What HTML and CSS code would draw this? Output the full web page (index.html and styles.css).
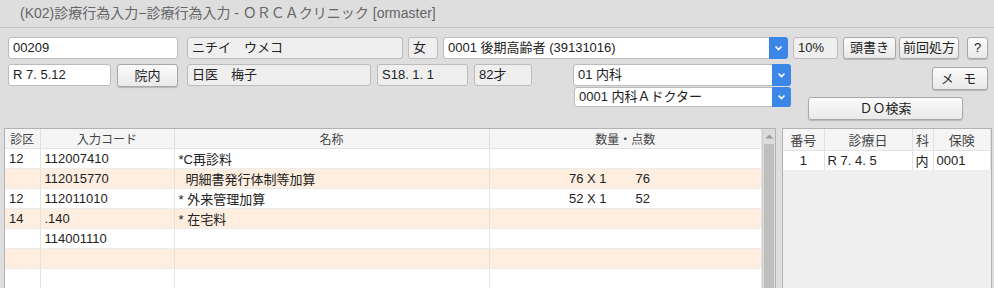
FILE: index.html
```html
<!DOCTYPE html>
<html lang="ja">
<head>
    <meta charset="UTF-8">
    <title>診療行為入力</title>
    <link rel="stylesheet" href="styles.css">
</head>
<body>
    <div class="titlebar">(K02)診療行為入力−診療行為入力 - ＯＲＣＡクリニック [ormaster]</div>

    <div class="form">
        <div class="row row-top">
            <div class="field w-id">00209</div>
            <div class="field ro w-kana">ニチイ　ウメコ</div>
            <div class="field ro w-sex">女</div>
            <div class="combo w-hoken">
                <div class="val">0001 後期高齢者 (39131016)</div>
                <div class="arrow"><svg width="9" height="6" viewBox="0 0 9 6"><path d="M1.5 1.5 L4.5 4.5 L7.5 1.5" fill="none" stroke="#fff" stroke-width="1.6"/></svg></div>
            </div>
            <div class="field ro w-rate">10%</div>
            <button class="btn w-atama">頭書き</button>
            <button class="btn w-zenkai">前回処方</button>
            <button class="btn w-help">?</button>
        </div>

        <div class="row row-bottom">
            <div class="field w-date">R 7. 5.12</div>
            <button class="btn w-innai">院内</button>
            <div class="field ro w-name">日医　梅子</div>
            <div class="field ro w-birth">S18. 1. 1</div>
            <div class="field ro w-age">82才</div>

            <div class="combos">
                <div class="combo">
                    <div class="val">01 内科</div>
                    <div class="arrow"><svg width="9" height="6" viewBox="0 0 9 6"><path d="M1.5 1.5 L4.5 4.5 L7.5 1.5" fill="none" stroke="#fff" stroke-width="1.6"/></svg></div>
                </div>
                <div class="combo small">
                    <div class="val">0001 内科Ａドクター</div>
                    <div class="arrow"><svg width="9" height="6" viewBox="0 0 9 6"><path d="M1.5 1.5 L4.5 4.5 L7.5 1.5" fill="none" stroke="#fff" stroke-width="1.6"/></svg></div>
                </div>
            </div>

            <div class="side-btns">
                <button class="btn w-memo">メ モ</button>
                <button class="btn w-do">ＤＯ検索</button>
            </div>
        </div>
    </div>

    <div class="panes">
        <div class="main">
            <table class="grid">
                <colgroup>
                    <col style="width:35px">
                    <col style="width:134px">
                    <col style="width:315px">
                    <col>
                </colgroup>
                <thead>
                    <tr><th>診区</th><th>入力コード</th><th>名称</th><th>数量・点数</th></tr>
                </thead>
                <tbody>
                    <tr><td>12</td><td>112007410</td><td>*C再診料</td><td></td></tr>
                    <tr class="alt"><td></td><td>112015770</td><td class="indent">明細書発行体制等加算</td><td><span class="qty">76 X 1</span><span class="pts">76</span></td></tr>
                    <tr><td>12</td><td>112011010</td><td>* 外来管理加算</td><td><span class="qty">52 X 1</span><span class="pts">52</span></td></tr>
                    <tr class="alt"><td>14</td><td>.140</td><td>* 在宅料</td><td></td></tr>
                    <tr><td></td><td>114001110</td><td></td><td></td></tr>
                    <tr class="alt"><td></td><td></td><td></td><td></td></tr>
                    <tr><td></td><td></td><td></td><td></td></tr>
                </tbody>
            </table>
            <div class="scrollbar">
                <div class="scroll-up"><svg width="9" height="5" viewBox="0 0 9 5"><path d="M0.5 4.5 L4.5 0.5 L8.5 4.5 Z" fill="#9a9a9a"/></svg></div>
                <div class="thumb"></div>
            </div>
        </div>

        <div class="side">
            <table class="grid history">
                <colgroup>
                    <col style="width:41px">
                    <col style="width:88px">
                    <col style="width:21px">
                    <col>
                </colgroup>
                <thead>
                    <tr><th>番号</th><th>診療日</th><th>科</th><th>保険</th></tr>
                </thead>
                <tbody>
                    <tr><td class="center">1</td><td>R 7. 4. 5</td><td>内</td><td>0001</td></tr>
                </tbody>
            </table>
        </div>
    </div>
</body>
</html>
```

FILE: styles.css
```css
* {
    margin: 0;
    padding: 0;
    box-sizing: border-box;
}

body {
    width: 994px;
    height: 288px;
    overflow: hidden;
    background: #dedede;
    color: #222;
    font-family: "Liberation Sans", "Noto Sans CJK JP", sans-serif;
    font-size: 13px;
}

.titlebar {
    height: 28px;
    line-height: 27px;
    padding-left: 20px;
    border-bottom: 1px solid #c4c4c4;
    font-size: 14px;
    color: #666;
    white-space: nowrap;
}

/* 上部フォーム */
.form {
    height: 100px;
    padding: 9px 6px 0 8px;
}

.row {
    display: flex;
    align-items: flex-start;
}

.row-bottom {
    margin-top: 5px;
}

.field {
    height: 22px;
    line-height: 20px;
    padding: 0 4px;
    border: 1px solid #bcbcbc;
    border-radius: 3px;
    background: #fff;
    white-space: nowrap;
    overflow: hidden;
}

.field.ro {
    background: #efefef;
}

.btn {
    height: 22px;
    border: 1px solid #a8a8a8;
    border-radius: 3px;
    background: linear-gradient(#fbfbfb, #e9e9e9);
    box-shadow: 0 1px 1px rgba(0, 0, 0, 0.18);
    font-family: inherit;
    font-size: 13px;
    color: #222;
    text-align: center;
    line-height: 20px;
    white-space: nowrap;
}

.combo {
    display: flex;
    height: 22px;
    border: 1px solid #bcbcbc;
    border-radius: 3px;
    background: #fff;
}

.combo .val {
    flex: 1;
    padding-left: 4px;
    line-height: 20px;
    white-space: nowrap;
    overflow: hidden;
}

.combo .arrow {
    width: 19px;
    margin: -1px -1px -1px 0;
    border-radius: 0 3px 3px 0;
    background: #3b87e8;
    display: flex;
    align-items: center;
    justify-content: center;
}

.combo.small {
    height: 20px;
    margin-left: 1px;
}

.combo.small .val {
    line-height: 18px;
}

.w-id { width: 170px; }
.w-kana { width: 216px; margin-left: 9px; }
.w-sex { width: 30px; margin-left: 5px; }
.w-hoken { width: 345px; margin-left: 5px; }
.w-rate { width: 45px; margin-left: 5px; }
.w-atama { width: 53px; margin-left: 5px; }
.w-zenkai { width: 60px; margin-left: 3px; }
.w-help { width: 21px; margin-left: 8px; }

.w-date { width: 103px; }
.w-innai { width: 61px; height: 23px; margin-left: 6px; }
.w-name { width: 184px; margin-left: 9px; }
.w-birth { width: 91px; margin-left: 6px; }
.w-age { width: 58px; margin-left: 6px; }

.combos {
    width: 218px;
    margin-left: 41px;
    display: flex;
    flex-direction: column;
    gap: 1px;
}

.side-btns {
    width: 191px;
    margin-left: 6px;
    display: flex;
    flex-direction: column;
    align-items: flex-end;
}

.w-memo {
    width: 56px;
    height: 23px;
    margin-top: 3px;
    letter-spacing: 3px;
}

.w-do {
    width: 155px;
    height: 23px;
    margin-top: 7px;
    margin-right: 25px;
}

/* 下部テーブル */
.panes {
    display: flex;
    gap: 6px;
    padding-left: 4px;
    height: 160px;
}

.main {
    width: 772px;
    display: flex;
    border: 1px solid #b2b2b2;
    border-bottom: none;
    background: #fff;
}

.grid {
    border-collapse: collapse;
    table-layout: fixed;
    width: 758px;
    align-self: flex-start;
}

.grid th {
    height: 19px;
    background: #f5f5f5;
    border-right: 1px solid #e0e0e0;
    border-bottom: 1px solid #e4e4e4;
    font-weight: normal;
    font-size: 12px;
    color: #444;
    text-align: center;
}

.grid td {
    height: 20px;
    padding: 0 4px;
    border-right: 1px solid #e2e2e2;
    border-bottom: 1px solid #ececec;
    white-space: nowrap;
}

.grid tr.alt td {
    background: #fdeee0;
}

.grid td.indent {
    padding-left: 11px;
}

.grid td.center {
    text-align: center;
}

.qty {
    display: inline-block;
    width: 113px;
    text-align: right;
}

.pts {
    display: inline-block;
    margin-left: 29px;
}

.scrollbar {
    width: 13px;
    background: #dcdcdc;
    border-left: 1px solid #cfcfcf;
    display: flex;
    flex-direction: column;
    align-items: center;
}

.scroll-up {
    height: 15px;
    display: flex;
    align-items: center;
    justify-content: center;
}

.thumb {
    width: 10px;
    flex: 1;
    background: #bebebe;
}

.side {
    width: 210px;
    border: 1px solid #b2b2b2;
    border-bottom: none;
    background: #efefef;
}

.history {
    width: 208px;
    background: #fff;
}

.history th {
    height: 21px;
    font-size: 13px;
}

.history td {
    height: 19px;
    padding: 0 3px;
}
```
